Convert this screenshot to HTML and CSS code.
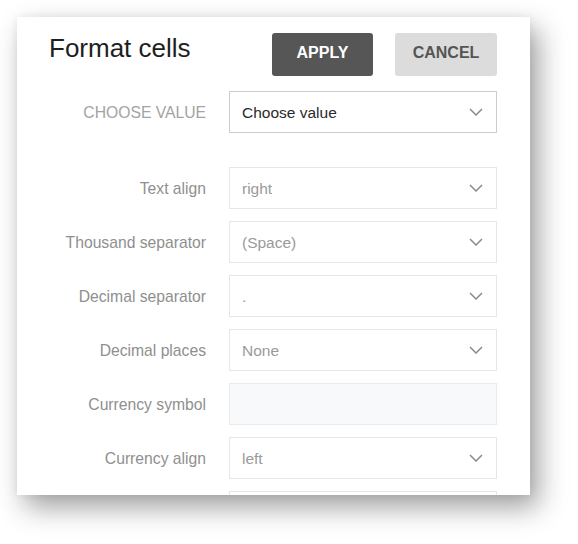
FILE: index.html
```html
<!DOCTYPE html>
<html>
<head>
<meta charset="utf-8">
<link rel="stylesheet" href="styles.css">
</head>
<body>
<div class="panel">
  <div class="header">
    <div class="title">Format cells</div>
    <div class="actions">
      <button class="btn btn-apply">APPLY</button>
      <button class="btn btn-cancel">CANCEL</button>
    </div>
  </div>
  <div class="form">
    <div class="row row-main">
      <div class="label label-caps">CHOOSE VALUE</div>
      <div class="field field-main"><span class="value">Choose value</span><svg class="chev" viewBox="0 0 14 8" width="14" height="8"><path d="M1 1 L7 7 L13 1" fill="none" stroke="#8a8a8a" stroke-width="1.5"/></svg></div>
    </div>
    <div class="row">
      <div class="label">Text align</div>
      <div class="field"><span class="value">right</span><svg class="chev" viewBox="0 0 14 8" width="14" height="8"><path d="M1 1 L7 7 L13 1" fill="none" stroke="#8a8a8a" stroke-width="1.5"/></svg></div>
    </div>
    <div class="row">
      <div class="label">Thousand separator</div>
      <div class="field"><span class="value">(Space)</span><svg class="chev" viewBox="0 0 14 8" width="14" height="8"><path d="M1 1 L7 7 L13 1" fill="none" stroke="#8a8a8a" stroke-width="1.5"/></svg></div>
    </div>
    <div class="row">
      <div class="label">Decimal separator</div>
      <div class="field"><span class="value">.</span><svg class="chev" viewBox="0 0 14 8" width="14" height="8"><path d="M1 1 L7 7 L13 1" fill="none" stroke="#8a8a8a" stroke-width="1.5"/></svg></div>
    </div>
    <div class="row">
      <div class="label">Decimal places</div>
      <div class="field"><span class="value">None</span><svg class="chev" viewBox="0 0 14 8" width="14" height="8"><path d="M1 1 L7 7 L13 1" fill="none" stroke="#8a8a8a" stroke-width="1.5"/></svg></div>
    </div>
    <div class="row">
      <div class="label">Currency symbol</div>
      <div class="field field-input"></div>
    </div>
    <div class="row">
      <div class="label">Currency align</div>
      <div class="field"><span class="value">left</span><svg class="chev" viewBox="0 0 14 8" width="14" height="8"><path d="M1 1 L7 7 L13 1" fill="none" stroke="#8a8a8a" stroke-width="1.5"/></svg></div>
    </div>
    <div class="row">
      <div class="label"></div>
      <div class="field"></div>
    </div>
  </div>
</div>
</body>
</html>
```

FILE: styles.css
```css
html, body {
  margin: 0;
  padding: 0;
  background: #ffffff;
}
body {
  font-family: "Liberation Sans", Arial, sans-serif;
  width: 578px;
  height: 544px;
  overflow: hidden;
}
.panel {
  box-sizing: border-box;
  margin: 17px 0 0 17px;
  width: 513px;
  height: 478px;
  padding: 16px 33px 0 32px;
  background: #ffffff;
  overflow: hidden;
  box-shadow: 8px 12px 26px rgba(0, 0, 0, 0.38), 0 0 8px rgba(0, 0, 0, 0.06);
}
.header {
  display: flex;
  justify-content: space-between;
  align-items: flex-start;
  height: 43px;
  margin-bottom: 15px;
}
.title {
  font-size: 26px;
  line-height: 30px;
  color: #1e1e1e;
}
.actions {
  display: flex;
  gap: 22px;
}
.btn {
  font-family: "Liberation Sans", Arial, sans-serif;
  font-weight: bold;
  font-size: 16px;
  height: 43px;
  border: none;
  border-radius: 3px;
  padding: 0 0 4px 0;
}
.btn-apply {
  width: 101px;
  background: #565656;
  color: #ffffff;
}
.btn-cancel {
  width: 102px;
  background: #dcdcdc;
  color: #555555;
}
.form {
  display: flex;
  flex-direction: column;
  gap: 12px;
}
.row {
  display: grid;
  grid-template-columns: 157px 268px;
  column-gap: 23px;
  align-items: center;
  height: 42px;
}
.row-main {
  margin-bottom: 22px;
}
.label {
  text-align: right;
  font-size: 15.7px;
  color: #8f8f8f;
  white-space: nowrap;
  padding-top: 1px;
}
.label-caps {
  color: #a3a3a3;
}
.field {
  box-sizing: border-box;
  height: 42px;
  border: 1px solid #e6e6e6;
  display: flex;
  align-items: center;
  justify-content: space-between;
  padding: 0 13px 0 12px;
  background: #ffffff;
}
.field-main {
  border-color: #cccccc;
}
.field-input {
  background: #f8f9fb;
  border-color: #ebebeb;
}
.value {
  font-size: 15.5px;
  color: #9a9a9a;
  padding-top: 1px;
}
.field-main .value {
  color: #2a2a2a;
}
.chev {
  display: block;
}
```
